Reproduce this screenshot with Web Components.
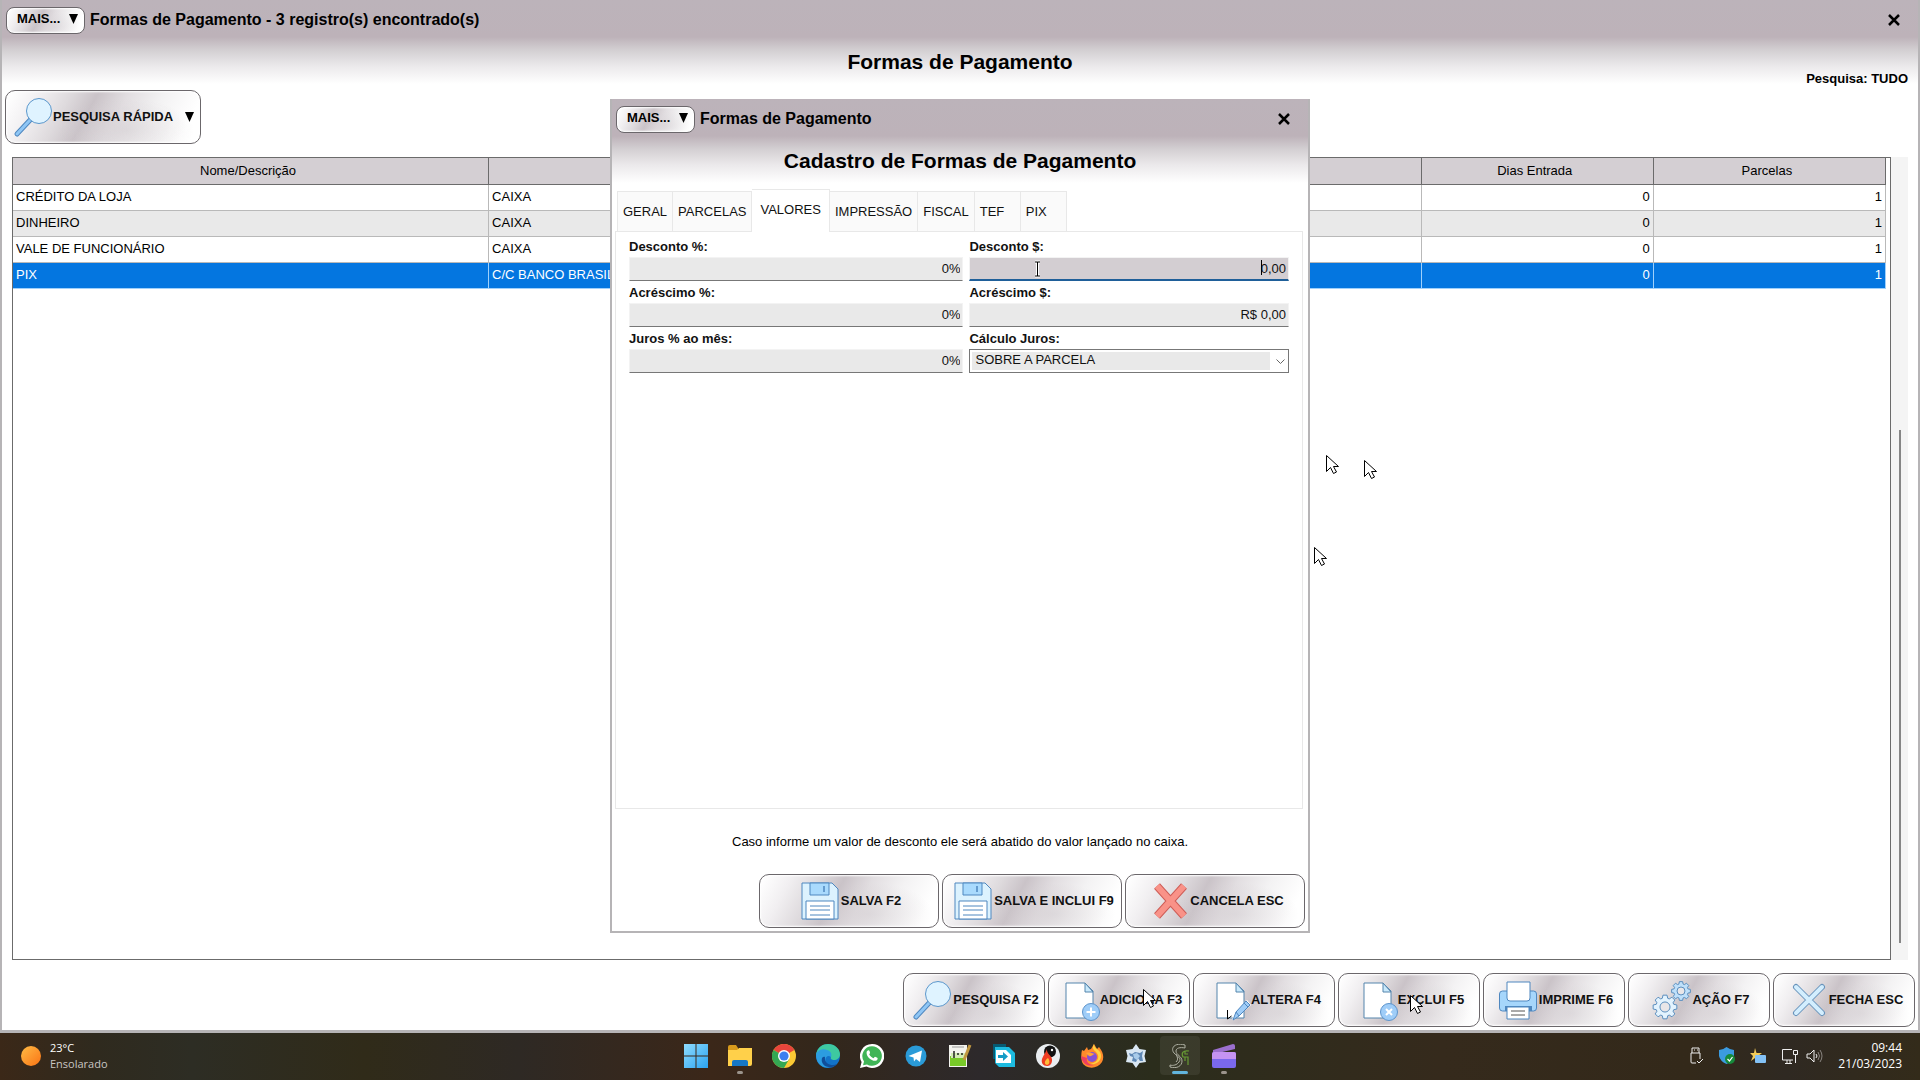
<!DOCTYPE html>
<html lang="pt-BR">
<head>
<meta charset="utf-8">
<title>Formas de Pagamento</title>
<style>
  html, body { height: 100%; }
  body {
    margin: 0;
    display: flex;
    flex-direction: column;
    position: relative;
    overflow: hidden;
    font: 13px/16px "Liberation Sans", Arial, sans-serif;
    color: #000;
    background: #fff;
  }
  #main { flex: 1; min-height: 0; --bottom: 3px; }
  .toolbar { padding: 4px 3px 0; display: flex; }
  data-grid { flex: 1; min-height: 0; margin: 13px 10px 0; }
  .actions { display: flex; gap: 3px; justify-content: flex-end; padding: 13px 3px 3px; }
  .actions tool-button { width: 142px; }

  /* the form floats over the list */
  #form {
    position: absolute;
    top: 99px;
    left: 50%;
    margin-left: -350px;
    width: 700px;
    height: 834px;
  }
  #form tab-panel { flex: 1; margin: 5px 5px 0 3px; }
  #form p { margin: 0; text-align: center; line-height: 65px; }
  #form .actions { padding-top: 0; }
  #form .actions tool-button { width: 180px; }
  mouse-pointer { position: absolute; }
</style>
</head>
<body>

<window-frame id="main" caption="Formas de Pagamento - 3 registro(s) encontrado(s)" heading="Formas de Pagamento">
  <span slot="status">Pesquisa: TUDO</span>
  <div class="toolbar">
    <tool-button icon="search" menu>PESQUISA RÁPIDA</tool-button>
  </div>
  <data-grid></data-grid>
  <div class="actions">
    <tool-button icon="search">PESQUISA F2</tool-button>
    <tool-button icon="add">ADICIONA F3</tool-button>
    <tool-button icon="edit">ALTERA F4</tool-button>
    <tool-button icon="remove">EXCLUI F5</tool-button>
    <tool-button icon="print">IMPRIME F6</tool-button>
    <tool-button icon="gears">AÇÃO F7</tool-button>
    <tool-button icon="close">FECHA ESC</tool-button>
  </div>
</window-frame>

<window-frame id="form" caption="Formas de Pagamento" heading="Cadastro de Formas de Pagamento">
  <tab-panel tabs="GERAL,PARCELAS,VALORES,IMPRESSÃO,FISCAL,TEF,PIX" active="VALORES">
    <form-field label="Desconto %:" value="0%"></form-field>
    <form-field label="Desconto $:" value="0,00" current></form-field>
    <form-field label="Acréscimo %:" value="0%"></form-field>
    <form-field label="Acréscimo $:" value="R$ 0,00"></form-field>
    <form-field label="Juros % ao mês:" value="0%"></form-field>
    <form-field label="Cálculo Juros:" value="SOBRE A PARCELA" type="select"></form-field>
  </tab-panel>
  <p>Caso informe um valor de desconto ele será abatido do valor lançado no caixa.</p>
  <div class="actions">
    <tool-button icon="save">SALVA F2</tool-button>
    <tool-button icon="save">SALVA E INCLUI F9</tool-button>
    <tool-button icon="cancel">CANCELA ESC</tool-button>
  </div>
</window-frame>

<task-bar></task-bar>

<mouse-pointer style="left: 1326px; top: 455px"></mouse-pointer>
<mouse-pointer style="left: 1364px; top: 460px"></mouse-pointer>
<mouse-pointer style="left: 1314px; top: 547px"></mouse-pointer>
<mouse-pointer style="left: 1143px; top: 989px"></mouse-pointer>
<mouse-pointer style="left: 1410px; top: 995px"></mouse-pointer>
<mouse-pointer style="left: 1227px; top: 1010px" kind="stub"></mouse-pointer>
<mouse-pointer style="left: 1034px; top: 261px" kind="text"></mouse-pointer>

<script>
const page = '<path d="M6 2h19l8 8v27H6z" fill="#fff" stroke="#5585ad"/><path d="M25 2v9h8z" fill="#c9e9fb" stroke="#5585ad"/>'
const badge = '<circle cx="31" cy="31" r="8.5" fill="#9fcdf8" stroke="#5d94cc"/>'
const gear = (x, y, r, fill) => {
  let teeth = ''
  for (let i = 0; i < 8; i++) {
    const a = i * Math.PI / 4
    for (const [d, k] of [[-.3, r * .76], [-.17, r], [.17, r], [.3, r * .76]]) {
      teeth += `${(x + k * Math.cos(a + d)).toFixed(2)},${(y + k * Math.sin(a + d)).toFixed(2)} `
    }
  }
  return `<polygon points="${teeth}" fill="${fill}" stroke="#5b8fbf"/><circle cx="${x}" cy="${y}" r="${r * .42}" fill="#e9e6e8" stroke="#5b8fbf"/>`
}
const cross = (d, width, line, fill) =>
  `<path d="${d}" stroke="${line}" stroke-width="${width}"/><path d="${d}" stroke="${fill}" stroke-width="${width - 2}"/>`

const icons = {
  search: '<path d="M17 21L3 36" stroke="#4f87bf" stroke-width="5" stroke-linecap="round"/><path d="M17 21L3 36" stroke="#8fc6f5" stroke-width="3" stroke-linecap="round"/><circle cx="25" cy="13" r="12.5" fill="#dff3ff" stroke="#5b97cc"/>',
  add: page + badge + '<path d="M31 26.500v9M26.500 31h9" stroke="#fff" stroke-width="2"/>',
  remove: page + badge + '<path d="M28 28l6 6M34 28l-6 6" stroke="#fff" stroke-width="2"/>',
  edit: page + '<path d="M21 39l3-9 12-11 4 5-12 11z" fill="#fff"/><path d="M22 39l3-8 10-11 4 4-11 11zM33 22l4 4M25 31l3 4" fill="#9fcdf8" stroke="#4f87bf"/>',
  print: '<rect x=".5" y="10" width="37" height="20" rx="3" fill="#a6d6fb" stroke="#4f87bf"/><path d="M8 1h23v16q0 3-3 3H11q-3 0-3-3z" fill="#fff" stroke="#4f87bf"/><path d="M6 25h27v5H6z" fill="#4f87bf"/><path d="M8 26h22v12H8z" fill="#fff" stroke="#4f87bf"/><path d="M12 30h14M12 34h14" stroke="#555"/>',
  gears: gear(13, 26, 12, '#e3f3fe') + gear(29, 10, 9.500, '#bfe0fa'),
  close: '<g stroke-linecap="round">' + cross('M7 6L33 32M33 6L7 32', 6, '#6793bb', '#d3eefe') + '</g>',
  cancel: cross('M7 4L34 34M34 4L7 34', 8, '#cf5d57', '#f99288'),
  save: '<path d="M1 1h30l6 6v30H1z" fill="#dcf2fe" stroke="#4f87bf"/><path d="M9 1h19v12H9z" fill="#a9dafd" stroke="#4f87bf"/><path d="M23 4v6" stroke="#4f87bf" stroke-width="1.500"/><path d="M5 19h28v18H5z" fill="#fff" stroke="#4f87bf"/><path d="M9 24h20M9 28h20M9 33h20" stroke="#4f87bf"/>'
}

const down = '<svg class="down" width="9" height="10" aria-hidden="true"><path d="M0 0h9L4.500 10z"/></svg>'
const sheen = `
  border: 1px solid #6b676b;
  box-shadow: inset 0 0 2px 1px #fff;
  background:
    radial-gradient(ellipse 35% 60% at 62% 75%, #cfc9cd80, #cfc9cd00),
    linear-gradient(118deg, #fff 2%, #f1eff1 16%, #dedadd 30%, #cac3c8 42%, #e2dee1 56%, #f3f2f3 72%, #fff 90%);
`

class Base extends HTMLElement {
  constructor() {
    super()
    this.attachShadow({ mode: 'open' })
  }
  connectedCallback() {
    this.shadowRoot.innerHTML = this.render()
  }
}

customElements.define('window-frame', class extends Base {
  render() {
    return `
      <style>
        :host {
          box-sizing: border-box;
          display: flex;
          flex-direction: column;
          border: solid #b6b4b6;
          border-width: 0 2px var(--bottom, 2px);
          background: linear-gradient(#bcb3ba 0, #bdb2b9 37px, #d3cfd2 50px, #ebe9eb 66px, #fff 84px) no-repeat #fff;
        }
        .bar { display: flex; align-items: center; height: 40px; gap: 5px; padding: 0 18px 0 4px; }
        .bar span { flex: 1; font-size: 16px; font-weight: bold; }
        button { font: inherit; margin: 0; color: inherit; }
        .more {
          display: flex; align-items: center; justify-content: space-between;
          width: 79px; height: 27px; padding: 0 6px 2px 10px;
          font-weight: bold; border-radius: 8px; ${sheen}
        }
        .x { padding: 0; border: 0; background: none; display: flex; }
        header { display: grid; height: 46px; }
        header > * { grid-area: 1 / 1; }
        h1 { margin: 0; text-align: center; font-size: 21px; line-height: 44px; }
        .status { align-self: end; justify-self: end; padding-right: 10px; font-weight: bold; line-height: 14px; }
      </style>
      <div class="bar">
        <button class="more" type="button">MAIS...${down}</button>
        <span>${this.getAttribute('caption')}</span>
        <button class="x" type="button" aria-label="Fechar">
          <svg width="12" height="12"><path d="M1 1l10 10M11 1L1 11" stroke="#000" stroke-width="2.500"/></svg>
        </button>
      </div>
      <header>
        <h1>${this.getAttribute('heading')}</h1>
        <div class="status"><slot name="status"></slot></div>
      </header>
      <slot></slot>
    `
  }
})

customElements.define('tool-button', class extends Base {
  render() {
    const menu = this.hasAttribute('menu')
    return `
      <style>
        :host { display: block; }
        button {
          box-sizing: border-box;
          width: 100%; height: 54px;
          display: flex; align-items: center; justify-content: center; gap: 2px;
          padding: 0 0 0 4px;
          font: inherit; font-weight: bold; color: #111; white-space: nowrap;
          border-radius: 10px; ${sheen}
        }
        button.menu { padding: 0 6px 0 8px; gap: 1px; }
        svg { flex: none; overflow: visible; }
        .down { margin-left: 11px; fill: #000; }
      </style>
      <button type="button" class="${menu ? 'menu' : ''}">
        <svg width="38" height="38" fill="none" aria-hidden="true">${icons[this.getAttribute('icon')]}</svg>
        <slot></slot>${menu ? down : ''}
      </button>
    `
  }
})

customElements.define('data-grid', class extends Base {
  render() {
    const rows = [
      ['CRÉDITO DA LOJA', 'CAIXA', 0, 1],
      ['DINHEIRO', 'CAIXA', 0, 1],
      ['VALE DE FUNCIONÁRIO', 'CAIXA', 0, 1],
      ['PIX', 'C/C BANCO BRASIL', 0, 1]
    ]
    return `
      <style>
        :host { display: flex; }
        .box { flex: 1; border: 1px solid #6b6b6b; padding-right: 4px; }
        table { width: 100%; table-layout: fixed; border-collapse: collapse; }
        th, td { box-sizing: border-box; height: 26px; padding: 0 3px; border-right: 1px solid #b9b9b9; border-bottom: 1px solid #b9b9b9; }
        th { padding: 0 5px 0 0; font-weight: normal; background: #d4cfd3; border-color: #6b6b6b; }
        td:nth-child(n+3) { text-align: right; }
        tr:nth-child(even) td { background: #e9e9e9; }
        tr:last-child td { background: #0476e0; color: #fff; border-color: #9fd0fb; }
        .track { width: 17px; background: #f4f4f4; position: relative; }
        .thumb { position: absolute; left: 8px; width: 2px; top: 34%; bottom: 17px; background: #868686; }
      </style>
      <div class="box">
        <table>
          <colgroup><col style="width: 25.4%"><col><col style="width: 12.4%"><col style="width: 12.4%"></colgroup>
          <thead><tr><th>Nome/Descrição</th><th></th><th>Dias Entrada</th><th>Parcelas</th></tr></thead>
          <tbody>${rows.map(r => `<tr>${r.map(c => `<td>${c}</td>`).join('')}</tr>`).join('')}</tbody>
        </table>
      </div>
      <div class="track"><div class="thumb"></div></div>
    `
  }
})

customElements.define('tab-panel', class extends Base {
  render() {
    const active = this.getAttribute('active')
    return `
      <style>
        :host { display: flex; flex-direction: column; }
        nav { display: flex; align-items: flex-end; padding-left: 2px; height: 41px; }
        button {
          box-sizing: border-box; height: 40px; min-width: 46px; padding: 0 5px; margin: 0;
          font: inherit; color: #111; text-align: left;
          border: 1px solid #e8e8e8; border-width: 1px 1px 0 0; background: #fafafa;
        }
        button:first-child { border-left-width: 1px; }
        button[aria-selected=true] { position: relative; height: 43px; margin-bottom: -1px; padding: 0 8px 2px; background: #fff; }
        .panel {
          flex: 1; border: 1px solid #e8e8e8; padding: 6px 13px 0 13px;
          display: grid; grid-template-columns: 335fr 320fr; gap: 2px 6px; align-content: start;
        }
      </style>
      <nav role="tablist">
        ${this.getAttribute('tabs').split(',').map(t => `<button type="button" role="tab" aria-selected="${t === active}">${t}</button>`).join('')}
      </nav>
      <div class="panel" role="tabpanel"><slot></slot></div>
    `
  }
})

customElements.define('form-field', class extends Base {
  render() {
    const value = this.getAttribute('value')
    const control = this.getAttribute('type') === 'select'
      ? `<select id="f"><option>${value}</option></select>
         <svg class="chevron" width="9" height="6" fill="none"><path d="M.5 .5l4 4 4-4" stroke="#666"/></svg>`
      : `<input id="f" value="${value}">`
    return `
      <style>
        :host { display: block; }
        label { display: block; line-height: 18px; padding-bottom: 1px; font-weight: bold; color: #111; }
        .wrap { position: relative; height: 25px; }
        input, select {
          box-sizing: border-box; display: block; width: 100%; height: 24px; margin: 0;
          font: inherit; color: #111; outline: 0; border-radius: 0;
        }
        input { text-align: right; padding: 0 2px 2px; background: #e9e9e9; border: 1px solid #f3f3f3; border-bottom-color: #777; }
        select { appearance: none; padding: 0 5px 2px; border: 1px solid #777; background: linear-gradient(#e9e9e9, #e9e9e9) 2px 2px / calc(100% - 20px) calc(100% - 4px) no-repeat #fff; }
        .chevron { position: absolute; right: 4px; top: 10px; }
        :host([current]) input { padding-bottom: 1px; background: #d3ced2; border-bottom: 2px solid #1f5f99; }
        :host([current]) .wrap::after { content: ""; position: absolute; right: 27px; top: 3px; width: 1px; height: 15px; background: #000; }
      </style>
      <label for="f">${this.getAttribute('label')}</label>
      <div class="wrap">${control}</div>
    `
  }
})

customElements.define('mouse-pointer', class extends Base {
  render() {
    const shapes = {
      arrow: '<path d="M.5 .5v16l4-4 3 6 3-1.500-3-5.500h5z" fill="#fff" stroke="#000"/>',
      text: '<path d="M1 1h5M3.500 1v14M1 15h5" stroke="#fff" stroke-width="3"/><path d="M1 1h2.500M3.500 1H6M3.500 1v14M1 15h5" stroke="#000"/>',
      stub: '<path d="M.5 0v9l4-3" stroke="#000" fill="none"/>'
    }
    return `
      <style>:host { display: block; pointer-events: none; } svg { display: block; overflow: visible; }</style>
      <svg width="13" height="20" aria-hidden="true">${shapes[this.getAttribute('kind') || 'arrow']}</svg>
    `
  }
})

// taskbar programs, 24x24
const apps = [
  ['Iniciar', '<defs><linearGradient id="w" x2="1" y2="1"><stop stop-color="#8fdcff"/><stop offset="1" stop-color="#2ba3f0"/></linearGradient></defs><path d="M0 0h11.500v11.500H0zM12.500 0H24v11.500H12.500zM0 12.500h11.500V24H0zM12.500 12.500H24V24H12.500z" fill="url(#w)"/>'],
  ['Explorador', '<path d="M0 3q0-2 2-2h6l2 3v5H0z" fill="#d99a1c"/><path d="M0 6h9l2-2h13v16q0 2-2 2H0z" fill="#ffd04a"/><path d="M4 22v-4q0-2 2-2h12q2 0 2 2v4z" fill="#1677c5"/>', 'open'],
  ['Chrome', '<circle cx="12" cy="12" r="12" fill="#fcc934"/><path d="M12 12L1.600 6A12 12 0 0 1 22.400 6z" fill="#e8453c"/><path d="M12 12L1.600 6A12 12 0 0 0 12 24l5.200-9z" fill="#34a853"/><circle cx="12" cy="12" r="6" fill="#fff"/><circle cx="12" cy="12" r="4.600" fill="#3b7ff0"/>'],
  ['Edge', '<circle cx="12" cy="12" r="12" fill="#1273c9"/><path d="M0 11C1 3 7 0 12 0c7 0 12 5 12 10 0 4-3 6-6 6-2 0-4-1-3-3 0-5-9-7-15-2z" fill="#3ec9a0"/><path d="M0 11c1-5 7-7 11-5 4 1 5 4 4 7-5-4-9 5-1 10C6 25 0 19 0 11z" fill="#2c9de0"/><path d="M9 13c-1 6 6 10 12 7-4 5-13 4-15-2-1-4 1-6 3-5z" fill="#104e9a"/>'],
  ['WhatsApp', '<path d="M12 0a12 12 0 1 1-5.500 22.500L0 24l1.600-6A12 12 0 0 1 12 0z" fill="#fff"/><path d="M12 2.200a9.800 9.800 0 1 1-5 18.200L3 21.200l1-3.800A9.800 9.800 0 0 1 12 2.200z" fill="#40b557"/><path d="M8 6.500c1-.5 1.500 0 2 2 .3 1-1 1.500-.7 2 1 2 2.500 3 4 3.700.7 0 1.200-1.500 1.800-1.400 3 1.200 3 1.500 2 3.200-3 3-11-2.500-10.500-7.500 0-1 .6-1.600 1.400-2z" fill="#fff"/>'],
  ['Telegram', '<circle cx="12" cy="12" r="10.500" fill="#2a9bd8"/><path d="M4.500 12L18 6.500l-2 11.500-4-3-2 2.500-.5-4z" fill="#fff"/>'],
  ['Notepad++', '<path d="M1 1h18v22H1z" fill="#f3f3ee"/><path d="M2 12h16v10H2z" fill="#78c928"/><path d="M3 9h14v5H3z" fill="#d3ebb5"/><path d="M4 3h12" stroke="#999"/><path d="M6 7v7M9 10h2M13 10h2" stroke="#222" stroke-width="1.500"/><path d="M22 1l-6 15" stroke="#c09740" stroke-width="3"/>'],
  ['Acesso remoto', '<path d="M1 0h13v15H1z" fill="#075a72"/><path d="M3 3h14l6 6v14H7l-4-4z" fill="#1dbbe0"/><path d="M4 6h10l5 5v8H4z" fill="#fff"/><path d="M6 11h5V8l5 4.500-5 4.500v-3H6z" fill="#159cc6"/>'],
  ['Gravador', '<circle cx="12" cy="12" r="12" fill="#e9edf0"/><circle cx="14" cy="7.500" r="6" fill="#111"/><circle cx="16" cy="6" r="1.200" fill="#fff"/><path d="M11 5c-1 5 6 7 5 12-.5 4-3 5-5 5-4 0-6-3-5-7 1-3 3-5 5-10z" fill="#ee3c22"/><path d="M12 14c2 3 2 6-1 7-3-1-3-4 1-7z" fill="#ffbd3a"/>'],
  ['Firefox', '<path d="M2 6l2 1 3-4 1 3 3-1 3-5 3 5 2-2c5 6 5 11 3 15-5 8-17 7-20 0-1-4-1-8 0-12z" fill="#ff8a2b"/><path d="M14 0c0 6 8 5 7 13-1 6-7 8-11 7 10-2 10-9 5-13-3-2-2-5-1-7z" fill="#ffd23f"/><path d="M1 12c1 8 7 11 13 9-5 0-8-3-7-7z" fill="#ee3e62"/><circle cx="12" cy="13" r="5" fill="#8451d4"/><path d="M6 9c4-1 5 0 9 1-2 0-3 3-6 2z" fill="#ffa436"/>'],
  ['Estrela', '<path d="M12 0l3.500 5L22 6l-1.500 6L22 18l-6.500 1L12 24l-3.500-5L2 18l1.500-6L2 6l6.500-1z" fill="#d9e7f3"/><path d="M5 9l3 1 3-2 5 1 3-2-1 5 1 5h-3l-2-3-2 4-4-1 1-4-3-1z" fill="#5f88b5"/><path d="M9 10l4-1 3 3-3 4-3-2z" fill="#a8cbea"/>'],
  ['SG', '<g fill="none" stroke="#afb0a3"><path d="M17 1C7-2 2 4 6 9c3 3 8 5 5 9-2 3-6 4-9 3v2c7 2 12-1 12-6 0-5-6-6-6-10 0-3 4-4 9-3z"/><path d="M8 10c1 3 3 5 0 8"/></g><path d="M21 7c-6-1-8 2-6 6h5v8M17 7v3h3M17 13v4" fill="none" stroke="#689b35" stroke-width="1.200"/>', 'active'],
  ['Clipchamp', '<path d="M1 6L21 0q2 0 2 2v3L2 10q-1 0-1-1z" fill="#9b6fce"/><rect x="0" y="8" width="24" height="16" rx="2" fill="#7a68ed"/><path d="M0 10q0-2 2-2h20q2 0 2 2v5H0z" fill="#c593f2"/>', 'open']
]

customElements.define('task-bar', class extends Base {
  render() {
    return `
      <style>
        :host {
          box-sizing: border-box; padding-bottom: 2px;
          display: grid; grid-template-columns: 1fr auto 1fr; align-items: center; height: 47px;
          color: #fff; font: 12px/16px "Open Sans", "Noto Sans", sans-serif;
          background: linear-gradient(90deg, #3b2818 0, #2f2a1e 5%, #2d2d24 10%, #302b19 19%, #2e2924 27%, #3b2719 37%, #33271b 43%, #2d292b 51%, #2b2d1c 60%, #352a1c 75%, #33291a 88%, #2f2922 93%, #332b1a);
        }
        .weather { display: flex; gap: 9px; align-items: center; padding-left: 21px; }
        .sun { width: 20px; height: 20px; border-radius: 50%; background: linear-gradient(135deg, #ffbc45, #fa7314); }
        .weather small, .tray small { display: block; font-size: 11px; line-height: 16px; }
        .weather small + small { color: #c9c6c2; }
        .apps { display: flex; height: 100%; }
        .apps button { position: relative; width: 44px; padding: 0; border: 0; background: none; display: flex; align-items: center; justify-content: center; }
        .apps svg { position: relative; }
        .active::before { content: ""; position: absolute; inset: 3px 2px; border-radius: 4px; background: #fff1; }
        .open::after, .active::after { content: ""; position: absolute; bottom: 4px; width: 6px; height: 3px; border-radius: 2px; background: #9b948c; }
        .active::after { width: 16px; background: #62b5de; }
        .tray { display: flex; align-items: center; justify-content: flex-end; padding-right: 18px; }
        .tray svg { margin-right: 15px; }
        .tray .near { margin-right: 7px; }
        .tray div { text-align: right; }
        .tray small { font-size: 12px; }
      </style>
      <div class="weather"><div class="sun"></div><div><small>23°C</small><small>Ensolarado</small></div></div>
      <div class="apps">
        ${apps.map(([name, art, state]) => `<button type="button" class="${state || ''}" aria-label="${name}"><svg width="24" height="24">${art}</svg></button>`).join('')}
      </div>
      <div class="tray">
        <svg width="16" height="18" fill="none" stroke="#eee"><path d="M4 6V1h7v5M3 6h9v6M3 6v9q0 1 1 1h4M6 3h1M9 3h1M9 14l2 2 4-4"/></svg>
        <svg width="16" height="18"><path d="M7.500 0q4 3 7.500 3v6q-1 5-7.500 8Q1 14 0 9V3q4 0 7.500-3z" fill="#3b9be0"/><circle cx="11" cy="12" r="5" fill="#168a3b"/><path d="M8.500 12l2 2 3-4" fill="none" stroke="#fff" stroke-width="1.200"/></svg>
        <svg width="16" height="18"><path d="M5 1l1.500 5H12l-4 3 2 5-5-3-4 3 2-5-3-3h4z" fill="#f3cc57"/><rect x="5" y="8" width="11" height="8" rx="1" fill="#83c1f5"/></svg>
        <svg class="near" width="18" height="18" fill="none" stroke="#eee"><path d="M11 2.500H1.500v10.500H12M4 16.500h7M6 13v3M9 13v3M12.500 3.500h4v4h-4zM14.500 8v8"/></svg>
        <svg width="17" height="16" fill="none" stroke="#eee"><path d="M1 6h3l4-4v12l-4-4H1zM10 6q2 2 0 4"/><path d="M12 4q3 4 0 8M14 2q4 6 0 12" stroke="#8a8580"/></svg>
        <div><small>09:44</small><small>21/03/2023</small></div>
      </div>
    `
  }
})
</script>
</body>
</html>
